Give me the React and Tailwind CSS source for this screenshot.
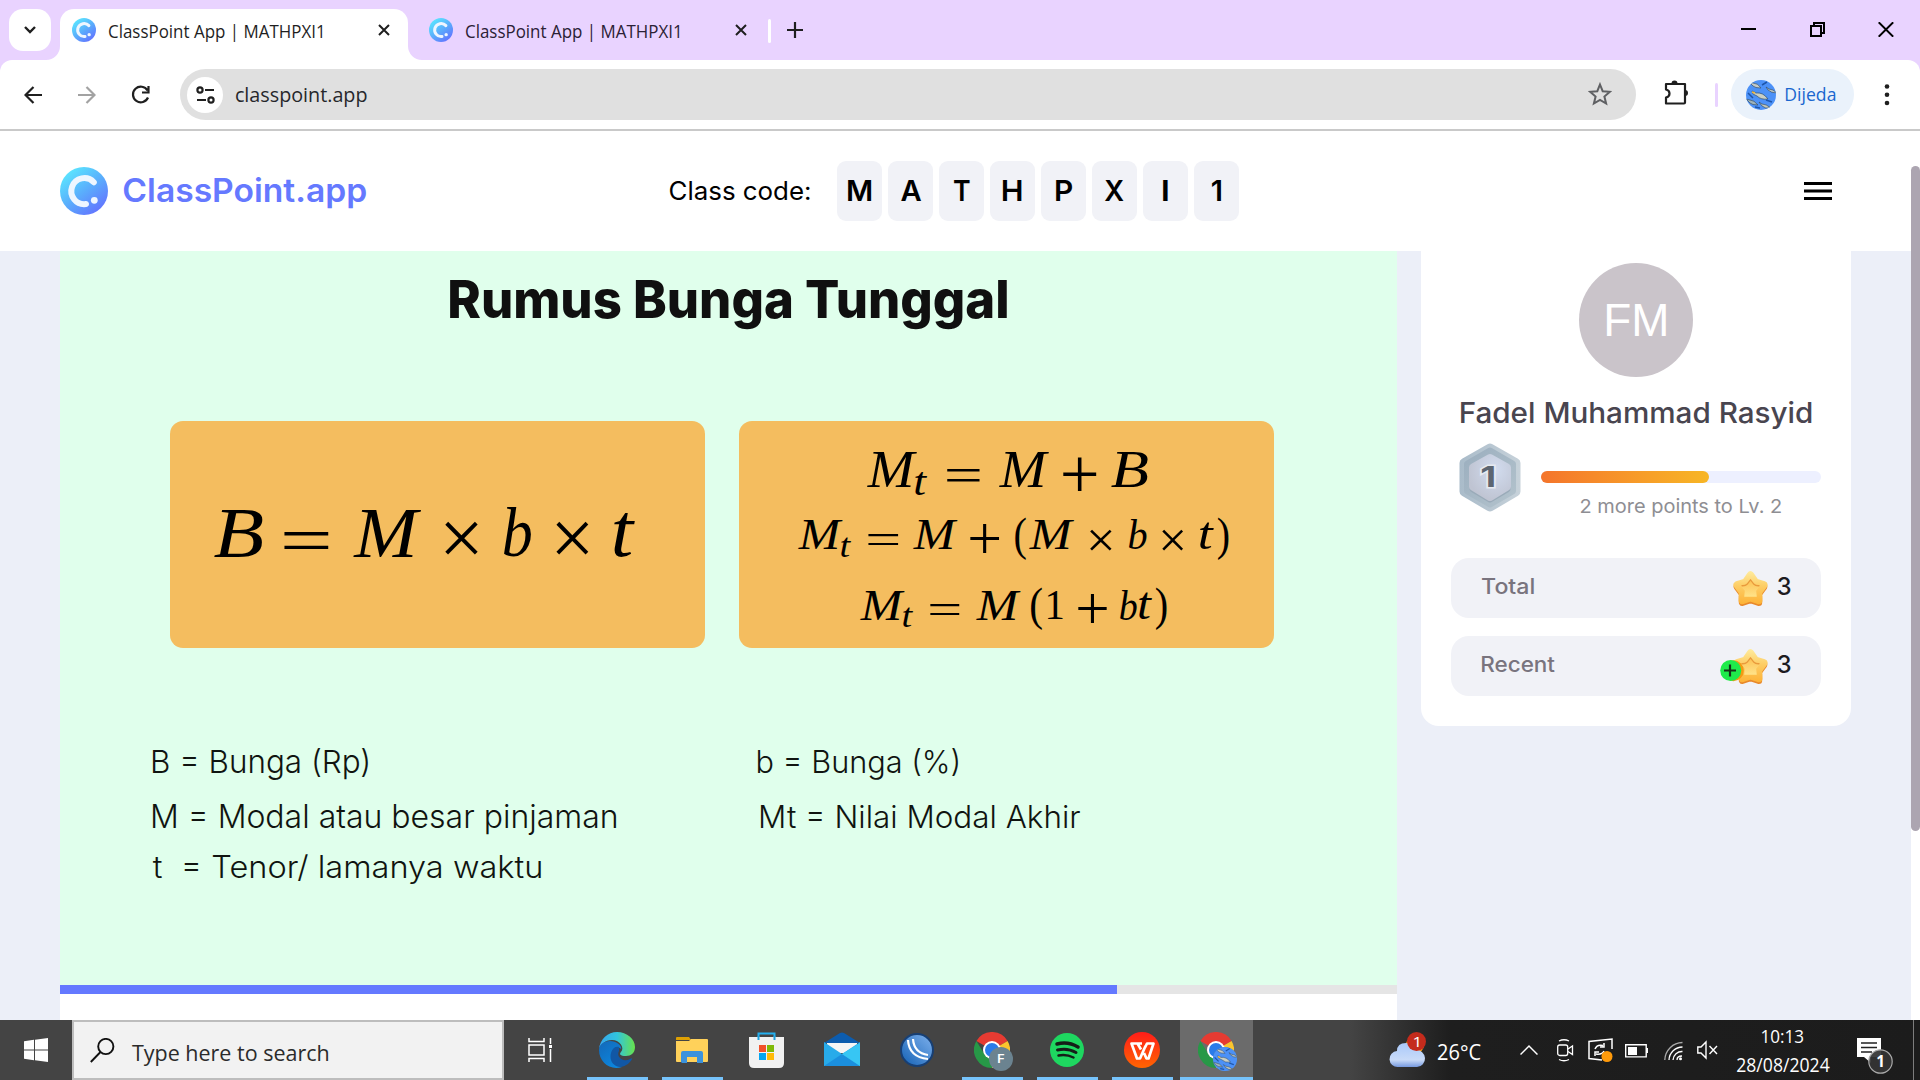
import React, { useLayoutEffect, useRef, useState } from "react";

/* Text whose inked area fills a box of w by h pixels. */
function Ink({ w, h, className = "", children }) {
  const ref = useRef(null);
  const [fit, setFit] = useState({ fontSize: h });
  useLayoutEffect(() => {
    const cs = getComputedStyle(ref.current);
    const ctx = document.createElement("canvas").getContext("2d");
    ctx.font = `${cs.fontStyle} ${cs.fontWeight} 200px ${cs.fontFamily}`;
    const m = ctx.measureText(String(children));
    const k = h / (m.actualBoundingBoxAscent + m.actualBoundingBoxDescent);
    const sx = w / ((m.actualBoundingBoxLeft + m.actualBoundingBoxRight) * k);
    const size = 200 * k;
    const base = size / 2 + ((m.fontBoundingBoxAscent - m.fontBoundingBoxDescent) * k) / 2;
    const top = base - m.actualBoundingBoxAscent * k;
    setFit({
      fontSize: size,
      transform: `translate(${m.actualBoundingBoxLeft * k * sx}px, ${-top}px) scaleX(${sx})`,
    });
  }, [w, h, children]);
  return (
    <span className={`block shrink-0 ${className}`} style={{ width: w, height: h }}>
      <span ref={ref} className="block w-max origin-top-left whitespace-pre leading-none" style={fit}>
        {children}
      </span>
    </span>
  );
}

const UI = "font-['Open_Sans','Noto_Sans',sans-serif]";
const GEO = "font-['Inter',sans-serif]";

function Logo({ size }) {
  return (
    <svg width={size} height={size} viewBox="0 0 48 48" className="shrink-0">
      <defs>
        <linearGradient id="lg" x1="0.15" y1="0.05" x2="0.85" y2="0.95">
          <stop offset="0" stopColor="#5be9ff" />
          <stop offset="0.5" stopColor="#5aaefc" />
          <stop offset="1" stopColor="#6370ff" />
        </linearGradient>
      </defs>
      <circle cx="24" cy="24" r="24" fill="url(#lg)" />
      <path d="M33.8 15.2A13 13 0 1 0 26 37" fill="none" stroke="#eef6ff" strokeWidth="6" strokeLinecap="round" />
      <circle cx="34.3" cy="33.3" r="3.4" fill="#eef6ff" />
    </svg>
  );
}

function Cross({ s = 12, w = 2, c = "#1f1f1f" }) {
  return (
    <svg width={s} height={s} viewBox="0 0 12 12" className="shrink-0">
      <path d="M1 1l10 10M11 1L1 11" stroke={c} strokeWidth={w} />
    </svg>
  );
}

function TabStrip() {
  return (
    <div className="flex h-[60px] bg-[#e9d3ff]">
      <button className="ml-[9px] mt-[9px] flex size-[42px] items-center justify-center rounded-[14px] bg-white">
        <svg width="14" height="10" viewBox="0 0 14 10"><path d="M2 2l5 5 5-5" fill="none" stroke="#1f1f1f" strokeWidth="2.4" /></svg>
      </button>
      <div className="relative ml-[9px] mt-[9px] flex h-[51px] w-[348px] rounded-t-[14px] bg-white">
        <svg className="absolute bottom-0 -left-[14px]" width="14" height="14"><path d="M14 0v14H0A14 14 0 0 0 14 0" fill="#fff" /></svg>
        <svg className="absolute bottom-0 -right-[14px]" width="14" height="14"><path d="M0 0v14h14A14 14 0 0 1 0 0" fill="#fff" /></svg>
        <div className="ml-3 mt-[9px]"><Logo size={24} /></div>
        <Ink w={213} h={17.5} className={`ml-[13px] mt-4 text-[#1f1f1f] ${UI}`}>ClassPoint App | MATHPXI1</Ink>
        <div className="ml-[56px] mt-[15px]"><Cross /></div>
      </div>
      <div className="mt-[9px] flex w-[361px]">
        <div className="ml-[21px] mt-[9px]"><Logo size={24} /></div>
        <Ink w={213} h={17.5} className={`ml-[13px] mt-4 text-[#2b2135] ${UI}`}>ClassPoint App | MATHPXI1</Ink>
        <div className="ml-[56px] mt-[15px]"><Cross /></div>
      </div>
      <div className="-ml-px mt-[19px] h-6 w-[3px] rounded bg-white" />
      <svg className="ml-4 mt-[22px]" width="16" height="16" viewBox="0 0 16 16"><path d="M8 0v16M0 8h16" stroke="#1f1f1f" strokeWidth="2.2" /></svg>
      <div className="ml-auto mr-[26px] mt-[22px] flex gap-[53px]">
        <svg width="16" height="15"><path d="M0 7h15" stroke="#000" strokeWidth="2" /></svg>
        <svg width="15" height="15" viewBox="0 0 15 15"><path d="M1 4h10v10H1zM4 4V1h10v10h-3" fill="none" stroke="#000" strokeWidth="2" /></svg>
        <svg width="16" height="15" viewBox="0 0 16 15"><path d="M.7.3l14.5 14.4M15.2.3L.7 14.7" stroke="#000" strokeWidth="2" /></svg>
      </div>
    </div>
  );
}

function FishAvatar({ size }) {
  return (
    <svg width={size} height={size} viewBox="0 0 30 30" className="shrink-0">
      <defs><clipPath id="av"><circle cx="15" cy="15" r="15" /></clipPath></defs>
      <g clipPath="url(#av)">
        <rect width="30" height="30" fill="#4c91f7" />
        <g stroke="#34506e" strokeWidth=".7">
          <path d="M6 11l4 2q7-1 12 6q-7 1-11-3l-4-2z" fill="#c9cfc5" />
          <path d="M3 2l4 1q5 0 8 5q-6 0-8-2z" fill="#c4cac8" />
          <path d="M20 7l3 2q4 0 8 4q-6 0-9-3z" fill="#bac4c4" />
          <path d="M0 19l4 1q4 0 8 5q-6 0-8-2z" fill="#9eb3ba" />
          <path d="M13 22l3 2q4 0 9 4q-6 1-9-2z" fill="#c5c9bb" />
        </g>
        <path d="M16 5l5-3M2 13l5 5M20 20l6 2M9 27l5 1" stroke="#1e56aa" strokeWidth="1.5" />
        <path d="M6 12l3 1" stroke="#f1b83b" strokeWidth="1.6" />
      </g>
    </svg>
  );
}

function Toolbar() {
  return (
    <div className="bg-[#e9d3ff]">
      <div className="flex h-[71px] rounded-t-[12px] border-b-2 border-[#c9c9c9] bg-white">
        <svg className="ml-6 mt-[26px]" width="18" height="18" viewBox="0 0 18 18"><path d="M18 9H2M9.5 1L1.5 9l8 8" fill="none" stroke="#1f1f1f" strokeWidth="2.2" /></svg>
        <svg className="ml-9 mt-[26px]" width="18" height="18" viewBox="0 0 18 18"><path d="M0 9h16M8.500 1l8 8-8 8" fill="none" stroke="#a2a2a2" strokeWidth="2.2" /></svg>
        <svg className="ml-[35px] mt-[25px]" width="19" height="20" viewBox="0 0 19 20"><path d="M16.500 5.500A7.800 7.800 0 1 0 17 12.500M17.500 1v6.500H11" fill="none" stroke="#1f1f1f" strokeWidth="2.2" /></svg>
        <div className="ml-[30px] mt-[9px] flex h-[51px] w-[1456px] rounded-full bg-[#e0e0e0]">
          <div className="ml-[7px] mt-2 flex size-9 items-center justify-center rounded-full bg-white">
            <svg width="19" height="18" viewBox="0 0 19 18" fill="none" stroke="#1f1f1f" strokeWidth="2.2">
              <circle cx="4" cy="4" r="2.600" /><path d="M9 4h9M1 14h9" /><circle cx="15" cy="14" r="2.600" />
            </svg>
          </div>
          <Ink w={130.5} h={19.5} className={`ml-[13px] mt-[18px] text-[#26272b] ${UI}`}>classpoint.app</Ink>
          <svg className="ml-auto mr-6 mt-[13px]" width="24" height="24" viewBox="0 0 24 24"><path d="M12 2.500l2.700 6.700 7.200.6-5.500 4.700 1.700 7-6.100-3.700-6.100 3.700 1.700-7-5.500-4.700 7.200-.6z" fill="none" stroke="#5f6063" strokeWidth="2" /></svg>
        </div>
        <svg className="ml-7 mt-5" width="25" height="25" viewBox="0 0 25 25">
          <path d="M2 4h19v8.500V22.500a1 1 0 0 1-1 1H2v-6q3.500-.7 3.500-4T2 9.500z" fill="none" stroke="#1f1f1f" strokeWidth="2.2" strokeLinejoin="round" />
          <path d="M7.500 3.500a3 3 0 0 1 6 0zM21 10a3 3 0 0 1 0 6z" fill="#1f1f1f" />
        </svg>
        <div className="ml-[26px] mt-[23px] h-6 w-[3px] rounded bg-[#e9d3ff]" />
        <div className="ml-[13px] mt-[9px] flex h-[51px] w-[123px] rounded-full bg-[#eaf2fb]">
          <div className="ml-[15px] mt-[11px]"><FishAvatar size={30} /></div>
          <Ink w={49} h={17.500} className={`ml-[10px] mt-[19px] text-[#1a67cf] ${UI}`}>Dijeda</Ink>
        </div>
        <svg className="ml-[30px] mt-6" width="6" height="22" fill="#1f1f1f"><circle cx="3" cy="2.500" r="2.300" /><circle cx="3" cy="10.800" r="2.300" /><circle cx="3" cy="19" r="2.300" /></svg>
      </div>
    </div>
  );
}

const CODE = [["M", 23], ["A", 20], ["T", 15.5], ["H", 18.5], ["P", 16], ["X", 18.5], ["I", 4.5], ["1", 9]];

function Header() {
  return (
    <header className="flex h-[120px] bg-white">
      <div className="ml-[60px] mt-9"><Logo size={48} /></div>
      <Ink w={242} h={31.5} className={`ml-[15.500px] mt-[45.500px] font-semibold text-[#6579ff] ${GEO}`}>ClassPoint.app</Ink>
      <Ink w={139.5} h={19} className={`ml-[304px] mt-[50px] text-black ${GEO}`}>Class code:</Ink>
      <div className="ml-7 mt-[30px] flex gap-[6px]">
        {CODE.map(([c, w]) => (
          <div key={c} className="flex h-[60px] w-[45px] items-center justify-center rounded-[9px] bg-[#f1f2f7]">
            <Ink w={w} h={21} className={`font-semibold text-black ${GEO}`}>{c}</Ink>
          </div>
        ))}
      </div>
      <svg className="ml-auto mr-[79px] mt-[51px]" width="28" height="18"><path d="M0 1.500h28M0 9h28M0 16.500h28" stroke="#000" strokeWidth="3" /></svg>
    </header>
  );
}

/* Each glyph: character, gap before it, width, drop from the cap line, height. */
const SIMPLE = [["B", 0, 48.5, 0, 47.5], ["=", 22, 44.7, 22, 17], ["M", 24.3, 68, 0, 47.5], ["×", 24.4, 33, 13.700, 33.3], ["b", 26, 27, -0.5, 48.5], ["×", 24.5, 32.5, 13.700, 33.3], ["t", 25.5, 21, 4, 44]];
const SUM = [["M", 0, 50, 0, 35], ["t", -2, 12, 19.7, 23.3], ["=", 20, 33, 15.700, 12.6], ["M", 19, 50, 0, 35], ["+", 14, 33.6, 4.700, 34], ["B", 15.4, 36.6, 0, 35]];
const EXPANDED = [["M", 0, 44.5, 0, 28.7], ["t", -2, 10, 16.4, 19.3], ["=", 17, 30.3, 13.4, 10.3], ["M", 15.7, 44.4, 0, 28.7], ["+", 12.3, 29.3, 4.4, 28.6], ["(", 15.8, 10.7, -2.6, 42.3], ["M", 3.5, 45, 0, 28.7], ["×", 15.5, 21.8, 8.4, 20.6], ["b", 17.2, 17.5, -0.3, 29.5], ["×", 15.8, 21.2, 8.4, 20.6], ["t", 17, 14, 2.7, 26.5], [")", 4, 10.4, -2.6, 42.3]];
const FACTORED = [["M", 0, 44.5, 0, 28.7], ["t", -2, 10, 16.4, 19.3], ["=", 17.5, 29.5, 13.4, 10.3], ["M", 16, 44.5, 0, 28.7], ["(", 10.5, 11, -2.6, 42.3], ["1", 6, 14.5, 0.7, 28], ["+", 16, 29, 4.4, 28.6], ["b", 13.3, 16.5, -0.3, 29.5], ["t", 2.5, 13, 2.7, 26.5], [")", 4, 10.5, -2.6, 42.3]];

function Formula({ glyphs, className }) {
  return (
    <div className={`flex items-start font-['Liberation_Serif',serif] text-black ${className}`}>
      {glyphs.map(([c, gap, w, drop, h], i) => (
        <div key={i} style={{ marginLeft: gap, marginTop: drop }}>
          <Ink w={w} h={h} className={/[A-Za-z]/.test(c) ? "italic" : ""}>{c}</Ink>
        </div>
      ))}
    </div>
  );
}

function Slide() {
  const note = `font-light text-[#101410] ${GEO}`;
  return (
    <main className="ml-[60px] flex h-[769px] w-[1337px] flex-col bg-white">
      <div className="h-[734px] bg-[#e0ffec]">
        <Ink w={557} h={49} className={`ml-[390px] mt-[30px] font-extrabold text-[#101010] ${GEO}`}>Rumus Bunga Tunggal</Ink>
        <div className="ml-[110px] mt-[91px] flex gap-[34px]">
          <div className="h-[227px] w-[535px] rounded-[13px] bg-[#f4bd5f]">
            <Formula glyphs={SIMPLE} className="ml-[43.500px] mt-[88.500px]" />
          </div>
          <div className="flex h-[227px] w-[535px] flex-col rounded-[13px] bg-[#f4bd5f]">
            <Formula glyphs={SUM} className="ml-[127.500px] mt-8 h-[68.300px]" />
            <Formula glyphs={EXPANDED} className="ml-[59px] h-[70.500px]" />
            <Formula glyphs={FACTORED} className="ml-[121px]" />
          </div>
        </div>
        <div className="mt-[100px] flex">
          <div className="ml-[93px] flex w-[605px] flex-col">
            <Ink w={215} h={31.500} className={`mt-px ${note}`}>B = Bunga (Rp)</Ink>
            <Ink w={463} h={30.500} className={`mt-[24px] ${note}`}>M = Modal atau besar pinjaman</Ink>
            <Ink w={388} h={30} className={`mt-5 ${note}`}>{"t  = Tenor/ lamanya waktu"}</Ink>
          </div>
          <div className="flex flex-col">
            <Ink w={200} h={32} className={note}>b = Bunga (%)</Ink>
            <Ink w={319} h={23.500} className={`ml-[3px] mt-[25.500px] ${note}`}>Mt = Nilai Modal Akhir</Ink>
          </div>
        </div>
      </div>
      <div className="h-[9px] bg-[#e5e5e5]"><div className="h-full w-[1057px] bg-[#6479ff]" /></div>
    </main>
  );
}

function Star() {
  const outline = "M18.500 5l5 7.300 8.300 2.600-5.200 7 .1 8.600-8.200-2.800-8.200 2.800.1-8.600-5.200-7 8.300-2.600z";
  return (
    <svg width="37" height="37" viewBox="0 0 37 37" className="shrink-0">
      <defs>
        <linearGradient id="sg" gradientUnits="userSpaceOnUse" x1="0" y1="0" x2="0" y2="36"><stop offset="0" stopColor="#ffeea2" /><stop offset=".45" stopColor="#fdcd65" /><stop offset="1" stopColor="#fdb032" /></linearGradient>
        <linearGradient id="sh" x1="0" y1="0" x2="0" y2="1"><stop offset="0" stopColor="#fdc254" /><stop offset="1" stopColor="#ffe389" /></linearGradient>
      </defs>
      <path d={outline} fill="#e8892b" stroke="#e8892b" strokeWidth="7" strokeLinejoin="round" transform="translate(0 2)" />
      <path d={outline} fill="url(#sg)" stroke="url(#sg)" strokeWidth="7.500" strokeLinejoin="round" />
      <path d="M18.500 10l3.300 4 6.400 2-4 4.800.6 6h-12.600l.6-6-4-4.800 6.400-2z" fill="url(#sh)" />
      <path d="M9.500 15.700q4 .3 5.500-1.400l3.500-4.500 3.500 4.500q1.500 1.700 5.500 1.400" fill="none" stroke="#e99a3c" strokeWidth="1.300" strokeLinejoin="round" />
    </svg>
  );
}

function StatRow({ label, w, h, plus, className = "" }) {
  return (
    <div className={`flex h-[60px] w-[370px] rounded-[18px] bg-[#f1f2f7] ${className}`}>
      <div className="ml-[31px] mt-[21.500px]"><Ink w={w} h={h} className={`font-medium text-[#79747e] ${GEO}`}>{label}</Ink></div>
      <div className="relative ml-auto mt-3">
        {plus && (
          <svg className="absolute -left-[12px] top-3 z-10" width="26" height="22" viewBox="0 0 26 22">
            <circle cx="13.300" cy="10.700" r="10.500" fill="#f39a13" /><circle cx="10.700" cy="10.500" r="10.500" fill="#1feb4b" />
            <path d="M10 4.500v12M4 10.500h12" stroke="#17321a" strokeWidth="2.200" />
          </svg>
        )}
        <Star />
      </div>
      <Ink w={12.300} h={17.700} className={`ml-[9px] mr-[31px] mt-5 font-medium text-[#1c1b1f] ${GEO}`}>3</Ink>
    </div>
  );
}

function Badge() {
  return (
    <div className="relative h-[69px] w-[62px] shrink-0">
      <svg width="62" height="69" viewBox="0 0 62 69">
        <defs>
          <linearGradient id="b1" gradientUnits="userSpaceOnUse" x1="0" y1="0" x2="62" y2="0"><stop offset="0" stopColor="#a9bbc9" /><stop offset="1" stopColor="#c7d2da" /></linearGradient>
          <linearGradient id="b2" x1="0" y1="0" x2="1" y2="1"><stop offset="0" stopColor="#9cafbf" /><stop offset="1" stopColor="#b2c2cc" /></linearGradient>
          <radialGradient id="b3" cx=".65" cy=".3" r=".8"><stop offset="0" stopColor="#d2dcef" /><stop offset="1" stopColor="#bfc4d2" /></radialGradient>
        </defs>
        <g strokeLinejoin="round">
          <path d="M31 5.500l25.500 14.500v28.500L31 63.500 5.500 48.500V20z" fill="url(#b1)" stroke="url(#b1)" strokeWidth="10" />
          <path d="M31 8l22.500 13v27L31 61 8.500 48V21z" fill="url(#b2)" stroke="url(#b2)" strokeWidth="7" />
          <path d="M31 17l17 10v19L31 56 14 46V27z" fill="#9aabb9" stroke="#9aabb9" strokeWidth="7" />
          <path d="M31 15l17 9.500v19L31 54 14 43.500V24.500z" fill="url(#b3)" stroke="url(#b3)" strokeWidth="8" />
        </g>
      </svg>
      <Ink w={12} h={21} className={`absolute left-[23px] top-6 font-bold text-[#5c6571] [paint-order:stroke_fill] [-webkit-text-stroke:3px_#e6eaf0] ${GEO}`}>1</Ink>
    </div>
  );
}

function Profile() {
  return (
    <aside className="ml-6 h-[475px] w-[430px] rounded-b-[18px] bg-white">
      <div className="ml-[158px] mt-3 flex size-[114px] items-center justify-center rounded-full bg-[#cac4ca]">
        <Ink w={59} h={32} className="text-white font-['Liberation_Sans',sans-serif]">FM</Ink>
      </div>
      <Ink w={350.500} h={27.500} className={`ml-[40px] mt-[25px] font-medium text-[#49454f] ${GEO}`}>Fadel Muhammad Rasyid</Ink>
      <div className="ml-[38px] mt-[13px] flex">
        <Badge />
        <div className="ml-5 mt-[28.500px] w-[280px]">
          <div className="h-3 rounded-full bg-[#edf0ff]"><div className="h-full w-3/5 rounded-full bg-linear-to-r from-[#f4742b] to-[#f7b625]" /></div>
          <Ink w={200} h={18.300} className={`ml-10 mt-[15.500px] text-[#8e8e93] ${GEO}`}>2 more points to Lv. 2</Ink>
        </div>
      </div>
      <StatRow label="Total" w={51.700} h={16} className="ml-[30px] mt-[41px]" />
      <StatRow label="Recent" w={72.700} h={15.700} plus className="ml-[30px] mt-[18px]" />
    </aside>
  );
}

function Edge() {
  return (
    <svg width="36" height="36" viewBox="0 0 36 36">
      <defs>
        <linearGradient id="e1"><stop offset="0" stopColor="#36a5ee" /><stop offset=".5" stopColor="#31c4de" /><stop offset="1" stopColor="#68e34c" /></linearGradient>
        <linearGradient id="e2" x1="0" y1="0" x2=".7" y2="1"><stop offset="0" stopColor="#1468b8" /><stop offset="1" stopColor="#0b87df" /></linearGradient>
      </defs>
      <path d="M0 17C1 7 9 0 18 0c10 0 18 7 18 15 0 6-4 9-9 9-6 0-7-2-5-4 4-4-1-12-9-12C6 8 1 13 0 17" fill="url(#e1)" />
      <path d="M0 18c0-6 6-9 11-9 7 0 12 5 11 8-3-3-8-2-9 4-2 8 4 13 10 14-12 4-23-5-23-17" fill="url(#e2)" />
      <path d="M20 15c-9-3-14 19 2 20 5-1 9-4 11-8 0-1-1-1-2 0-8 4-14-3-11-8z" fill="#1157a5" />
    </svg>
  );
}

function Chrome({ children }) {
  return (
    <div className="relative size-9">
      <svg width="36" height="36" viewBox="0 0 36 36">
        <path d="M18 18L2.400 9A18 18 0 0 1 33.600 9z" fill="#e63b32" />
        <path d="M18 18l15.600-9A18 18 0 0 1 18 36z" fill="#fbc52e" />
        <path d="M18 36A18 18 0 0 1 2.400 9L11 23l9 4z" fill="#279847" />
        <path d="M2.400 9H33.600L25 9.500H12z" fill="#e63b32" />
        <circle cx="18" cy="18" r="9" fill="#fff" /><circle cx="18" cy="18" r="7" fill="#2a7be9" />
      </svg>
      <div className="absolute left-[15px] top-[15px] flex size-6 items-center justify-center rounded-full bg-[#6b8390]">{children}</div>
    </div>
  );
}

const Folder = () => (
  <svg width="32" height="27" viewBox="0 0 32 27"><path d="M0 2a1 1 0 0 1 1-1h12l2 3H0z" fill="#dea003" /><path d="M0 5h13l2-2h16a1 1 0 0 1 1 1v21a1 1 0 0 1-1 1H1a1 1 0 0 1-1-1z" fill="#ffd15a" /><path d="M5 26V17a2 2 0 0 1 2-2h18a2 2 0 0 1 2 2v10h-6v-6H11v6H6z" fill="#3b92dc" /></svg>
);
const Store = () => (
  <svg width="36" height="36" viewBox="0 0 36 36"><path d="M9.500 8V1.500h16V8" fill="none" stroke="#24b0ef" strokeWidth="2" /><path d="M0 5h35v26q0 5-5 5H5q-5 0-5-5z" fill="#f1f1f1" /><path d="M8.500 4h2v4h-2zM24.500 4h2v4h-2z" fill="#1e9fdc" /><path d="M10 13h7v7h-7z" fill="#f2512a" /><path d="M18 13h7v7h-7z" fill="#7fba09" /><path d="M10 21h7v7h-7z" fill="#05a5f0" /><path d="M18 21h7v7h-7z" fill="#ffba08" /></svg>
);
const Mail = () => (
  <svg width="36" height="34" viewBox="0 0 36 34"><path d="M0 11L16 1q2-1 4 0l16 10z" fill="#0c5cae" /><path d="M3 11h30v10H3z" fill="#f5f5f5" /><path d="M0 10l18 12L36 10v24H0z" fill="#28abea" /><path d="M0 34l18-12 18 12z" fill="#1b8fde" /><path d="M18 22L36 11v23z" fill="#37c6f4" /></svg>
);
const Globe = () => (
  <svg width="34" height="34" viewBox="0 0 34 34"><defs><linearGradient id="gg" x1="0" y1="1" x2="1" y2="0"><stop stopColor="#1260b4" /><stop offset="1" stopColor="#80b2ee" /></linearGradient></defs><circle cx="17" cy="17" r="16" fill="url(#gg)" stroke="#173f74" strokeWidth="2" /><path d="M8 7q1 17 20 19M13 6q1 14 15 16" fill="none" stroke="#fff" strokeWidth="2.200" /></svg>
);
const Spotify = () => (
  <svg width="34" height="34" viewBox="0 0 34 34"><circle cx="17" cy="17" r="17" fill="#1ed760" /><g fill="none" stroke="#151e18" strokeLinecap="round"><path d="M7 11q11-3 21 3" strokeWidth="3.500" /><path d="M7.500 17q10-2.500 18.500 2.500" strokeWidth="3" /><path d="M8.500 22.500q8-1.500 15 2" strokeWidth="2.500" /></g></svg>
);
const Wps = () => (
  <svg width="36" height="36" viewBox="0 0 36 36"><defs><linearGradient id="wg" x1="0" y1="0" x2="0" y2="1"><stop stopColor="#ff1d19" /><stop offset="1" stopColor="#ff6502" /></linearGradient></defs><circle cx="18" cy="18" r="18" fill="url(#wg)" /><path d="M18 11.500H7.500L13 26.500h3l5.500-12.500M13.500 11.500l3.500 6M20 21l2.500 5.500h2l5-15H23l-2 4" fill="none" stroke="#fff" strokeWidth="2.700" strokeLinejoin="round" /></svg>
);

function TaskButton({ top, open, active, children }) {
  return (
    <div className={active ? "flex h-[60px] w-[73px] flex-col items-center bg-[#6b6b6b]" : "mx-[7px] flex h-[60px] w-[61px] flex-col items-center"}>
      <div className="h-[57px]" style={{ paddingTop: top }}>{children}</div>
      {open && <div className="h-[3px] w-full bg-[#76c3fb]" />}
    </div>
  );
}

function Tray() {
  return (
    <div className="ml-auto flex h-[60px] text-white">
      <div className="relative mt-3 h-9 w-[37px]">
        <svg width="37" height="36" viewBox="0 0 37 36"><defs><linearGradient id="cg" x1="0" y1="0" x2="0" y2="1"><stop stopColor="#a9c9fa" /><stop offset=".7" stopColor="#c9dbf8" /><stop offset="1" stopColor="#7699df" /></linearGradient></defs><circle cx="26" cy="13" r="9" fill="#f9a01d" /><path d="M9 35a8 8 0 0 1-1-16q0-8 9-8 7 0 10 7a8.500 8.500 0 0 1 1 17z" fill="url(#cg)" /></svg>
        <div className="absolute top-0 left-[18px] flex size-[19px] items-center justify-center rounded-full bg-[#c42b1c]"><Ink w={4.500} h={10} className={UI}>1</Ink></div>
      </div>
      <Ink w={42.500} h={16} className={`ml-3 mt-[24.500px] ${UI}`}>26°C</Ink>
      <svg className="ml-[39px] mt-6" width="18" height="12" viewBox="0 0 18 12"><path d="M.5 10.500L9 2l8.500 8.500" fill="none" stroke="#fff" strokeWidth="1.500" /></svg>
      <svg className="ml-[19px] mt-[18px]" width="17" height="24" viewBox="0 0 17 24" fill="none" stroke="#fff" strokeWidth="1.300"><rect x=".7" y="7" width="10" height="10.500" rx="2" /><path d="M11 11l4.500-3v8.500L11 13.500M2 3q5-2.500 10 0M2 21.500q5 2.500 10 0" /></svg>
      <svg className="ml-[14px] mt-[17px]" width="26" height="25" viewBox="0 0 26 25" fill="none" stroke="#fff" strokeWidth="1.500"><path d="M24 12V2L1 4.500v17L14 23" /><path d="M7 12q2-5 8-3.500M16 6v4h-4M16 14q-2 4-8 3M7 19v-4h4" /><circle cx="19" cy="19.500" r="5.500" fill="#ff9a0a" stroke="none" /></svg>
      <svg className="ml-[11px] mt-6" width="24" height="14" viewBox="0 0 24 14"><path d="M.7.700h20.500v12.200H.7z" fill="none" stroke="#fff" strokeWidth="1.400" /><path d="M3 3h9v8H3zM21 4h2v5h-2z" fill="#fff" /></svg>
      <svg className="ml-[15px] mt-[21px]" width="19" height="20" viewBox="0 0 19 20" fill="none" stroke="#fff" strokeWidth="1.300"><path d="M.8 19A18 18 0 0 1 18.500 1.500" stroke="#aaa" /><path d="M5 19A13.500 13.500 0 0 1 18.500 6M9 19a9 9 0 0 1 9.500-8.500M13 19q0-4 5-4" /><circle cx="16.500" cy="17.800" r="1.500" fill="#fff" stroke="none" /></svg>
      <svg className="ml-[14px] mt-[20px]" width="21" height="20" viewBox="0 0 21 20" fill="none" stroke="#fff" strokeWidth="1.400"><path d="M.8 7H4l5-5v16l-5-5H.8zM12.500 6l7.500 8M20 6l-7.500 8" /></svg>
      <div className="ml-[19px] flex flex-col items-center">
        <Ink w={41} h={13} className={`mt-[10.500px] ${UI}`}>10:13</Ink>
        <Ink w={92.500} h={14} className={`mt-[15px] ${UI}`}>28/08/2024</Ink>
      </div>
      <div className="relative ml-7 mt-[18px] h-9 w-[37px]">
        <svg width="37" height="37" viewBox="0 0 37 37"><path d="M0 0h24v19H14v6l-7-6H0z" fill="#fff" /><path d="M4 5h16M4 9.500h16M4 14h11" stroke="#222" strokeWidth="1.500" /><circle cx="23.500" cy="23.500" r="11.700" fill="#343434" fillOpacity=".93" stroke="#aaa" strokeWidth="1.200" /></svg>
        <Ink w={5.500} h={12} className={`absolute left-5 top-[18px] font-bold ${UI}`}>1</Ink>
      </div>
      <div className="ml-[19px] mr-[6px] h-full w-px bg-[#7d7d7d]" />
    </div>
  );
}

function Taskbar() {
  return (
    <footer className="flex h-[60px] bg-[linear-gradient(90deg,#444_0px,#444_1350px,#1e1e1e_1450px,#1c1c1c_1920px)]">
      <div className="flex w-[72px] items-center justify-center">
        <svg width="24" height="24" viewBox="0 0 24 24" fill="#fff"><path d="M0 3.300l10-1.500v9.700H0zM11 1.700L24 0v11.500H11zM0 12.500h10v9.700L0 20.700zM11 12.500h13V24l-13-1.700z" /></svg>
      </div>
      <div className="flex w-[432px] border-2 border-[#bdbdbd] bg-[#f2f2f2]">
        <svg className="ml-4 mt-4" width="25" height="25" viewBox="0 0 25 25" fill="none" stroke="#111" strokeWidth="1.900"><circle cx="15.800" cy="8.500" r="7.600" /><path d="M10.500 14L.8 24" /></svg>
        <Ink w={196} h={22} className={`ml-[17px] mt-[21.500px] text-[#2b2b2b] ${UI}`}>Type here to search</Ink>
      </div>
      <svg className="ml-6 mt-[18px]" width="26" height="24" viewBox="0 0 26 24" fill="none" stroke="#fff" strokeWidth="1.500"><path d="M1 0v3.500h15V0M1 7h15v10H1zM1 24v-3.500h15V24M22.500 0v6M22.500 11v13" /><path d="M21 7h3v3h-3z" fill="#fff" stroke="none" /></svg>
      <div className="ml-[25.500px] flex">
        <TaskButton top={12} open><Edge /></TaskButton>
        <TaskButton top={16} open><Folder /></TaskButton>
        <TaskButton top={12}><Store /></TaskButton>
        <TaskButton top={12}><Mail /></TaskButton>
        <TaskButton top={13}><Globe /></TaskButton>
        <TaskButton top={12} open><Chrome><Ink w={6} h={9} className={`font-semibold text-white ${UI}`}>F</Ink></Chrome></TaskButton>
        <TaskButton top={13} open><Spotify /></TaskButton>
        <TaskButton top={12} open><Wps /></TaskButton>
        <TaskButton top={12} open active><Chrome><FishAvatar size={24} /></Chrome></TaskButton>
      </div>
      <Tray />
    </footer>
  );
}

export default function App() {
  return (
    <div className="flex h-[1080px] w-[1920px] flex-col overflow-hidden bg-white">
      <TabStrip />
      <Toolbar />
      <div className="flex h-[889px]">
        <div className="w-[1911px]">
          <Header />
          <div className="flex h-[769px] bg-[#eceff8]">
            <Slide />
            <Profile />
          </div>
        </div>
        <div className="w-[9px] bg-white"><div className="mt-[35px] h-[665px] rounded-full bg-[#aca5b1]" /></div>
      </div>
      <Taskbar />
    </div>
  );
}
